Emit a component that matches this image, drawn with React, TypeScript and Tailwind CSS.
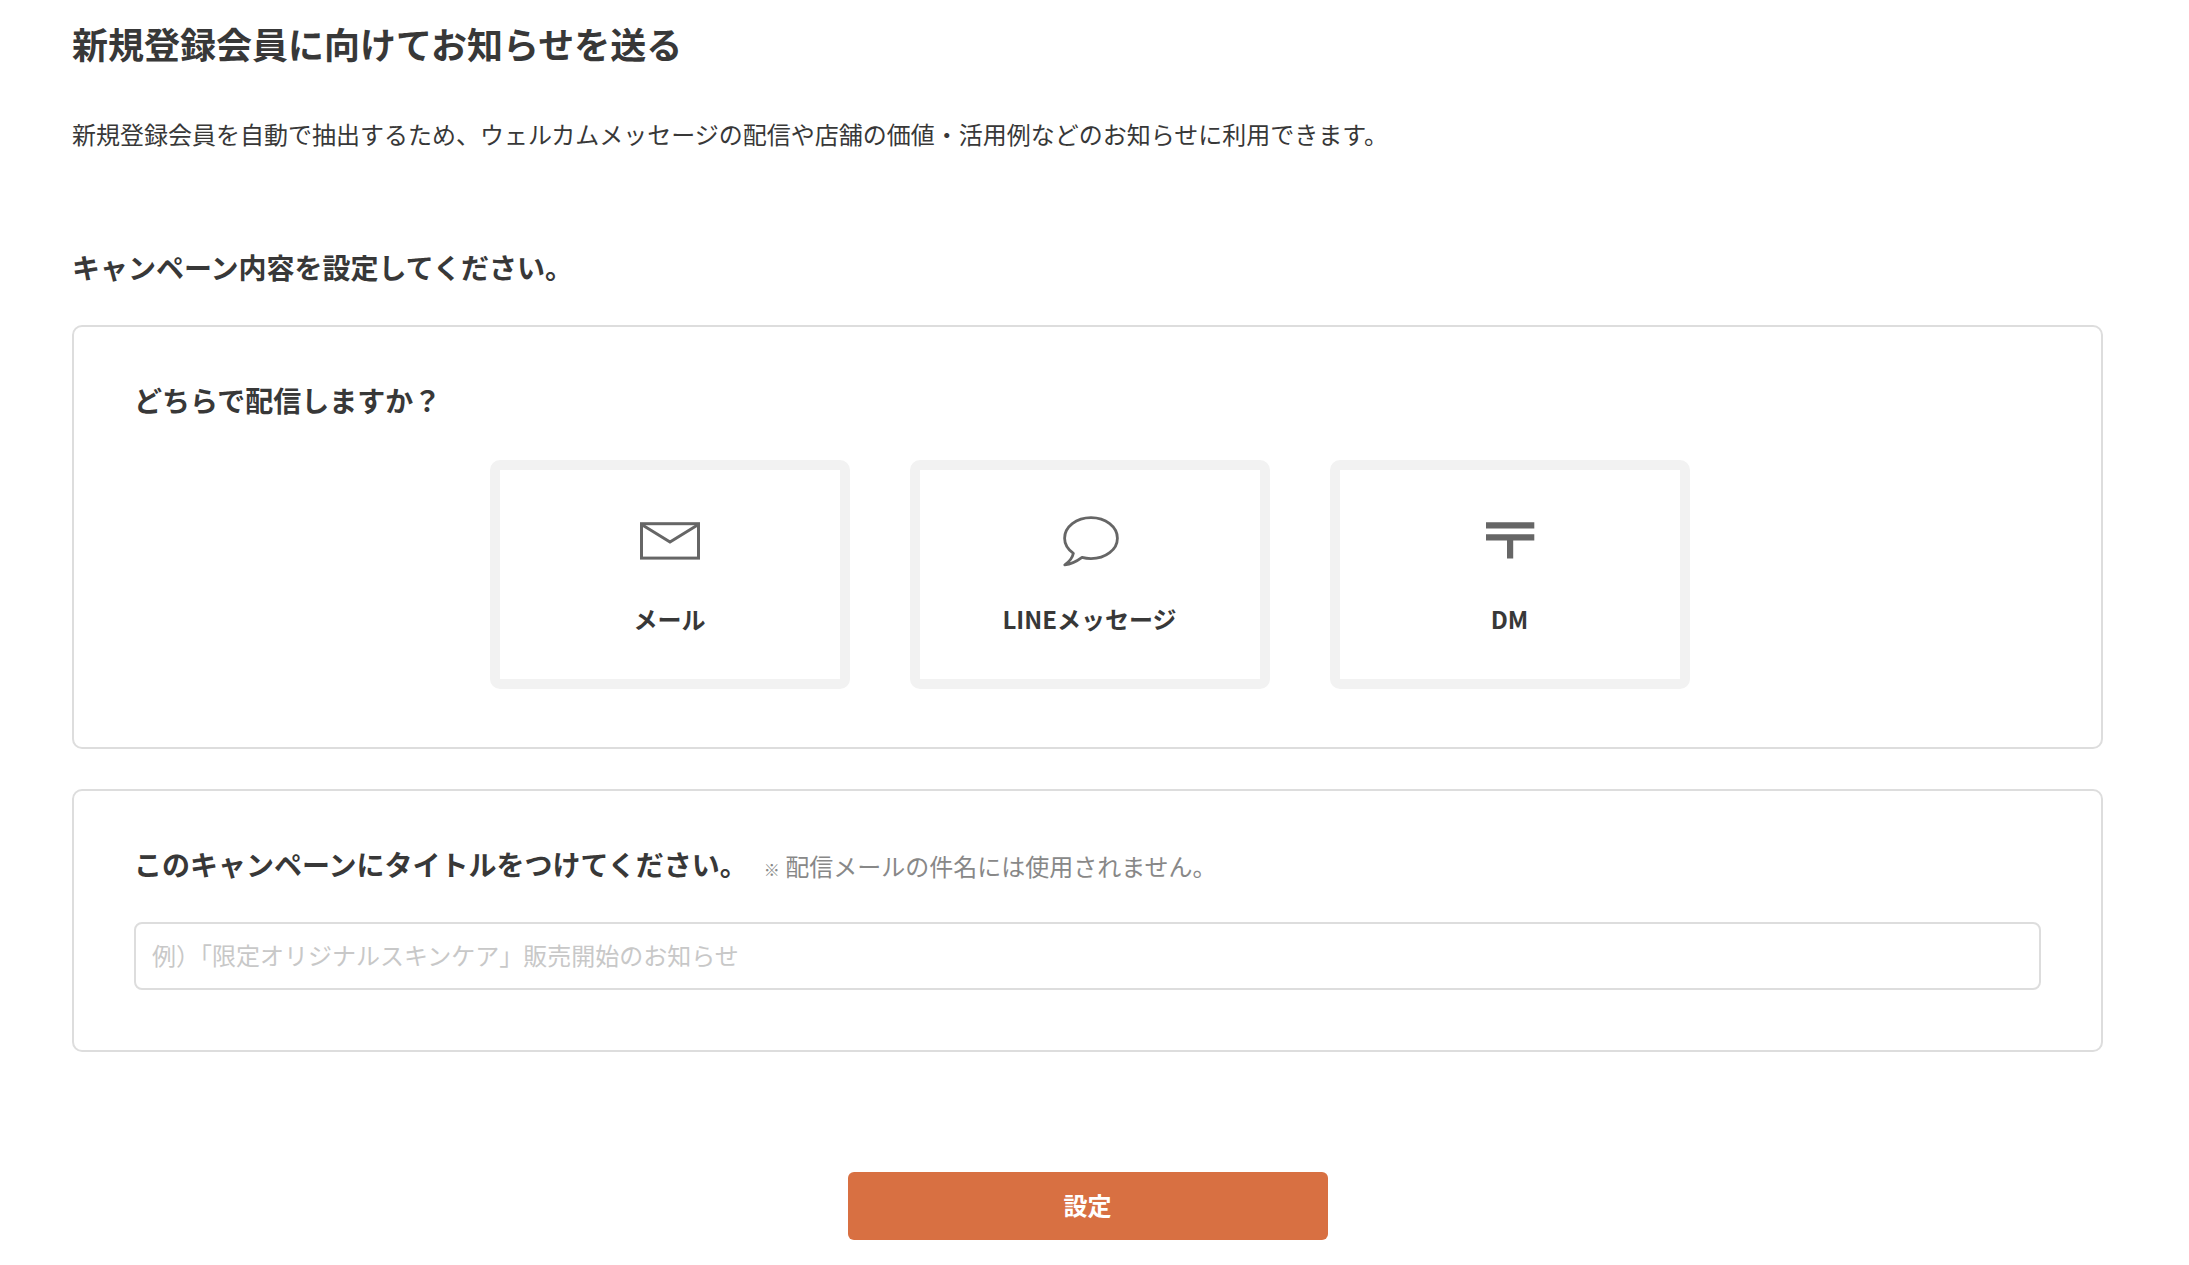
import { useState } from "react";
import type { FormEvent, ReactNode } from "react";

type Channel = {
    id: string;
    label: string;
    icon: ReactNode;
};

function MailIcon() {
    return (
        <svg width="60" height="60" viewBox="0 0 60 60" fill="none" stroke="#666" strokeWidth="3" aria-hidden="true">
            <rect x="1.5" y="12.7" width="57" height="34.4" />
            <path d="M2 13.7 L30 31 L58 13.7" />
        </svg>
    );
}

function BubbleIcon() {
    return (
        <svg
            width="60"
            height="60"
            viewBox="0 0 60 60"
            fill="none"
            stroke="#666"
            strokeWidth="2.8"
            strokeLinejoin="round"
            aria-hidden="true"
        >
            <path d="M13.4 42.3 C8 38.5 4.6 33.2 4.6 27.2 C4.6 15.8 16.4 6.6 31 6.6 S57.4 15.8 57.4 27.2 S45.6 47.6 31 47.6 C27.8 47.6 24.8 47.2 22 46.4 C17.2 50 11.2 53.2 4.8 53.8 C9.6 50.6 12.4 46.8 13.4 42.3 Z" />
        </svg>
    );
}

function PostIcon() {
    return (
        <svg width="60" height="60" viewBox="0 0 60 60" fill="#666" aria-hidden="true">
            <path d="M6 11.2h48.3v6.2H6z M6 23.2h48.3v6.2H6z M27 29h6.2v18.5H27z" />
        </svg>
    );
}

const channels: Channel[] = [
    { id: "mail", label: "メール", icon: <MailIcon /> },
    { id: "line", label: "LINEメッセージ", icon: <BubbleIcon /> },
    { id: "dm", label: "DM", icon: <PostIcon /> },
];

export default function App() {
    const [channel, setChannel] = useState("");
    const [title, setTitle] = useState("");

    const handleSubmit = (e: FormEvent) => {
        e.preventDefault();
    };

    return (
        <main className="min-h-screen bg-white pt-4 pr-[86px] pb-6 pl-[72px] font-['Noto_Sans_CJK_JP',sans-serif] text-2xl leading-9 text-[#383838]">
            <h1 className="text-4xl leading-[54px] font-bold">新規登録会員に向けてお知らせを送る</h1>
            <p className="mt-[46px]">
                新規登録会員を自動で抽出するため、ウェルカムメッセージの配信や店舗の価値・活用例などのお知らせに利用できます。
            </p>

            <form onSubmit={handleSubmit}>
                <h2 className="mt-[94px] text-[28px] leading-[42px] font-bold">
                    キャンペーン内容を設定してください。
                </h2>

                {/* 配信方法 */}
                <fieldset className="mt-[37px] rounded-[10px] border-2 border-[#ddd] px-[60px] pt-[52px] pb-[58px]">
                    <legend className="contents">
                        <span className="block text-[28px] leading-[42px] font-bold">どちらで配信しますか？</span>
                    </legend>
                    <div className="mt-[39px] flex flex-wrap justify-center gap-[60px] pl-1">
                        {channels.map((c) => (
                            <label
                                key={c.id}
                                className="flex w-[360px] cursor-pointer flex-col items-center rounded-[10px] border-10 border-[#f2f2f2] pt-[41px] pb-[42px] has-checked:border-[#d87042]"
                            >
                                <input
                                    type="radio"
                                    name="channel"
                                    value={c.id}
                                    checked={channel === c.id}
                                    onChange={() => setChannel(c.id)}
                                    className="sr-only"
                                />
                                {c.icon}
                                <span className="mt-[30px] font-bold">{c.label}</span>
                            </label>
                        ))}
                    </div>
                </fieldset>

                {/* タイトル */}
                <section className="mt-10 rounded-[10px] border-2 border-[#ddd] px-[60px] pt-[52px] pb-[60px]">
                    <div className="flex flex-wrap items-baseline gap-x-4">
                        <label htmlFor="title" className="text-[28px] leading-[42px] font-bold">
                            このキャンペーンにタイトルをつけてください。
                        </label>
                        <p id="title-note" className="text-[#888]">
                            <span className="text-base">※</span> 配信メールの件名には使用されません。
                        </p>
                    </div>
                    <input
                        id="title"
                        type="text"
                        value={title}
                        onChange={(e) => setTitle(e.target.value)}
                        aria-describedby="title-note"
                        placeholder="例）「限定オリジナルスキンケア」販売開始のお知らせ"
                        className="mt-[37px] block h-[68px] w-full rounded-lg border-2 border-[#ddd] px-4 pb-1 placeholder:text-[#c8c8c8]"
                    />
                </section>

                <button
                    type="submit"
                    className="mx-auto mt-[120px] block h-[68px] w-[480px] rounded-md bg-[#d87042] pb-0.5 font-bold text-white"
                >
                    設定
                </button>
            </form>
        </main>
    );
}
